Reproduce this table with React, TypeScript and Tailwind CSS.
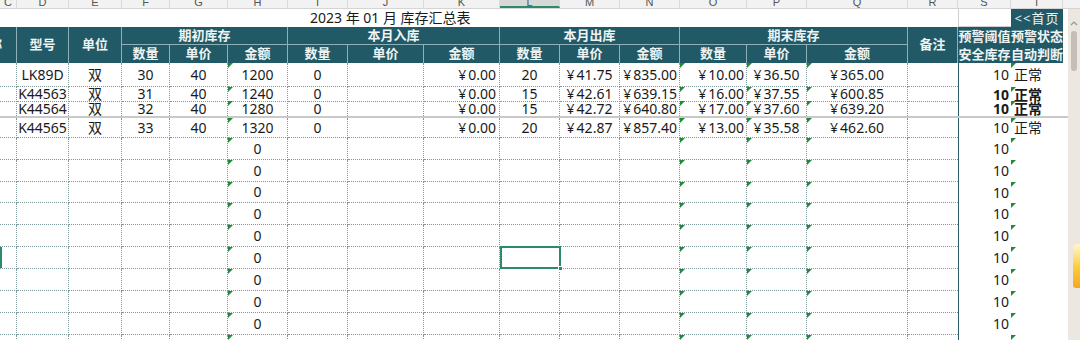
import React from "react";

const COLS =
  "grid grid-cols-[17px_52px_53px_48px_58px_60px_60px_76px_76px_60px_60px_60px_67px_60px_101px_50px_53px_52px_5px]";

const TEAL = "bg-[#215a66]";
const LETTERS = ["C", "D", "E", "F", "G", "H", "I", "J", "K", "L", "M", "N", "O", "P", "Q", "R", "S", "T", ""];

// alignment of each column in the data area
const ALIGN = [
  "justify-center",
  "justify-center",
  "justify-center",
  "justify-center",
  "justify-center",
  "justify-center",
  "justify-center",
  "justify-center",
  "justify-end pr-[3px]",
  "justify-center",
  "justify-center",
  "justify-end pr-[2px]",
  "justify-end pr-[2px]",
  "justify-center",
  "justify-center",
  "justify-center",
  "justify-end pr-[2px]",
  "justify-start pl-[3px]",
  "",
];

const MARKED = [5, 12, 13, 14, 17];

type RowData = { h: string; vals: string[]; bold?: boolean; noBottom?: boolean; selected?: boolean };

const filled: string[][] = [
  ["", "LK89D", "双", "30", "40", "1200", "0", "", "¥0.00", "20", "¥41.75", "¥835.00", "¥10.00", "¥36.50", "¥365.00", "", "10", "正常"],
  ["", "K44563", "双", "31", "40", "1240", "0", "", "¥0.00", "15", "¥42.61", "¥639.15", "¥16.00", "¥37.55", "¥600.85", "", "10", "正常"],
  ["", "K44564", "双", "32", "40", "1280", "0", "", "¥0.00", "15", "¥42.72", "¥640.80", "¥17.00", "¥37.60", "¥639.20", "", "10", "正常"],
  ["", "K44565", "双", "33", "40", "1320", "0", "", "¥0.00", "20", "¥42.87", "¥857.40", "¥13.00", "¥35.58", "¥462.60", "", "10", "正常"],
];

const empty = ["", "", "", "", "", "0", "", "", "", "", "", "", "", "", "", "", "10", ""];

const emptyHeights = ["h-[22px]", "h-[22px]", "h-[21px]", "h-[22px]", "h-[22px]", "h-[22px]", "h-[22px]", "h-[22px]", "h-[22px]", "h-[22px]"];

const rows: RowData[] = [
  { h: "h-[24px]", vals: filled[0] },
  { h: "h-[14px]", vals: filled[1], bold: true },
  { h: "h-[15px]", vals: filled[2], bold: true, noBottom: true },
  { h: "h-[2px]", vals: [], noBottom: true },
  { h: "h-[20px]", vals: filled[3] },
  ...emptyHeights.map((h, i) => ({ h, vals: empty, selected: i === 5 })),
];

function Mark() {
  return (
    <span className="absolute left-0 top-0 w-0 h-0 border-t-[5px] border-r-[5px] border-t-[#1f8a3a] border-r-transparent" />
  );
}

// money values: yen sign with a little space after it
function Val({ v }: { v: string }) {
  if (v.startsWith("¥")) {
    return (
      <span>
        <span className="mr-[2px]">¥</span>
        {v.slice(1)}
      </span>
    );
  }
  return <span>{v}</span>;
}

function DataRow({ row }: { row: RowData }) {
  if (row.vals.length === 0) {
    return <div className="h-[2px] w-[1068px] shrink-0 bg-[#c9c9c9]" />;
  }
  return (
    <div className={`${COLS} ${row.h} shrink-0`}>
      {LETTERS.map((_, i) => {
        let border = "";
        if (i <= 14) border = row.noBottom ? "border-r border-dotted border-[#7f9a9a]" : "border-r border-b border-dotted border-[#7f9a9a]";
        else if (i === 15) border = row.noBottom ? "" : "border-b border-dotted border-[#7f9a9a]";
        else if (i === 16) border = "border-l border-solid border-l-[#2a5d67]";
        const v = row.vals[i] ?? "";
        const bold = row.bold && (i === 16 || i === 17) ? "font-bold" : "";
        return (
          <div key={i} className={`relative flex items-center leading-none whitespace-nowrap ${ALIGN[i]} ${border} ${bold}`}>
            {MARKED.includes(i) && <Mark />}
            {v && <Val v={v} />}
            {row.selected && i === 0 && <span className="absolute left-0 top-0 h-full w-[2px] bg-[#2b8a6c]" />}
            {row.selected && i === 9 && (
              <span className="absolute left-0 top-[-1px] w-[61px] h-[23px] border-2 border-[#2b8a6c] z-10">
                <span className="absolute right-[-4px] bottom-[-4px] w-[5px] h-[5px] bg-[#2b8a6c] border border-white" />
              </span>
            )}
          </div>
        );
      })}
    </div>
  );
}

function HeadCell({ children, className = "" }: { children?: React.ReactNode; className?: string }) {
  return (
    <div className={`${TEAL} flex items-center justify-center font-bold text-[#eef3f3] whitespace-nowrap overflow-hidden ${className}`}>
      {children}
    </div>
  );
}

export default function App() {
  const groups = ["期初库存", "本月入库", "本月出库", "期末库存"];
  return (
    <div className="w-[1080px] h-[340px] overflow-hidden bg-white flex text-[13px] text-[#1a1a1a] font-['Noto_Sans','Noto_Sans_CJK_SC',sans-serif]">
      {/* sheet */}
      <div className="w-[1068px] flex flex-col overflow-hidden">
        {/* column letters */}
        <div className={`${COLS} h-[9px] shrink-0 bg-[#f2f2f2] border-b border-[#d4d4d4] overflow-hidden`}>
          {LETTERS.map((l, i) => (
            <div
              key={i}
              className={`flex justify-center items-start overflow-hidden text-[11px] text-[#555] font-['Liberation_Sans',sans-serif] ${
                i < 18 ? "border-r border-[#dadada]" : ""
              } ${l === "L" ? "bg-[#d8d8d8] border-b-2 border-b-[#2b8a6c]" : ""}`}
            >
              <span className="mt-[-4px] leading-[12px]">{l}</span>
            </div>
          ))}
        </div>

        {/* title row */}
        <div className={`${COLS} h-[18px] shrink-0`}>
          <div />
          <div className="col-span-15 flex items-center pl-[293px] text-[14px] whitespace-nowrap leading-none">
            2023 年 01 月 库存汇总表
          </div>
          <div className="border-l border-b border-[#cfcfcf]" />
          <div className={`${TEAL} flex items-center justify-center text-[#eef3f3] text-[13px] leading-none tracking-[1px]`}>
            &lt;&lt;首页
          </div>
          <div />
        </div>

        {/* header */}
        <div className={`${COLS} grid-rows-[18px_18px] shrink-0`}>
          <HeadCell className="row-span-2 justify-end border-r border-[#8db1b7]">
            <span className="mr-[14px]">称</span>
          </HeadCell>
          <HeadCell className="row-span-2 border-r border-[#8db1b7]">型号</HeadCell>
          <HeadCell className="row-span-2 border-r border-[#8db1b7]">单位</HeadCell>
          {groups.map((g) => (
            <HeadCell key={g} className="col-span-3 border-r border-b border-[#8db1b7]">
              {g}
            </HeadCell>
          ))}
          <HeadCell className="row-span-2 border-r border-[#8db1b7]">备注</HeadCell>
          <HeadCell className="row-span-2 flex-col leading-[18px]">
            <span>预警阈值</span>
            <span>（安全库存）</span>
          </HeadCell>
          <HeadCell className="row-span-2 flex-col leading-[18px]">
            <span>预警状态</span>
            <span>（自动判断）</span>
          </HeadCell>
          <div className="row-span-2 bg-white" />
          {groups.map((g) =>
            ["数量", "单价", "金额"].map((s) => (
              <HeadCell key={g + s} className="border-r border-[#8db1b7]">
                {s}
              </HeadCell>
            ))
          )}
        </div>

        {/* data */}
        <div className="text-[14px] flex flex-col shrink-0">
          {rows.map((r, i) => (
            <DataRow key={i} row={r} />
          ))}
        </div>
      </div>

      {/* scrollbar */}
      <div className="w-[12px] flex flex-col">
        <div className="h-[9px] shrink-0 bg-[#f2f2f2] border-b border-[#d4d4d4]" />
        <div className="flex-1 bg-[#ece7e1] flex flex-col items-center">
          <svg className="mt-[12px]" width="8" height="5" viewBox="0 0 8 5">
            <path d="M1 4 L4 1 L7 4" fill="none" stroke="#9a9590" strokeWidth="1.2" />
          </svg>
          <div className="mt-[5px] w-[6px] h-[40px] rounded-full bg-[#c4beb7]" />
          <div className="mt-[173px] self-end w-[7px] h-[44px] rounded-tl-[4px] rounded-bl-[3px] bg-gradient-to-b from-[#fff6c8] via-[#fbcf3a] to-[#f5a623]" />
        </div>
      </div>
    </div>
  );
}
